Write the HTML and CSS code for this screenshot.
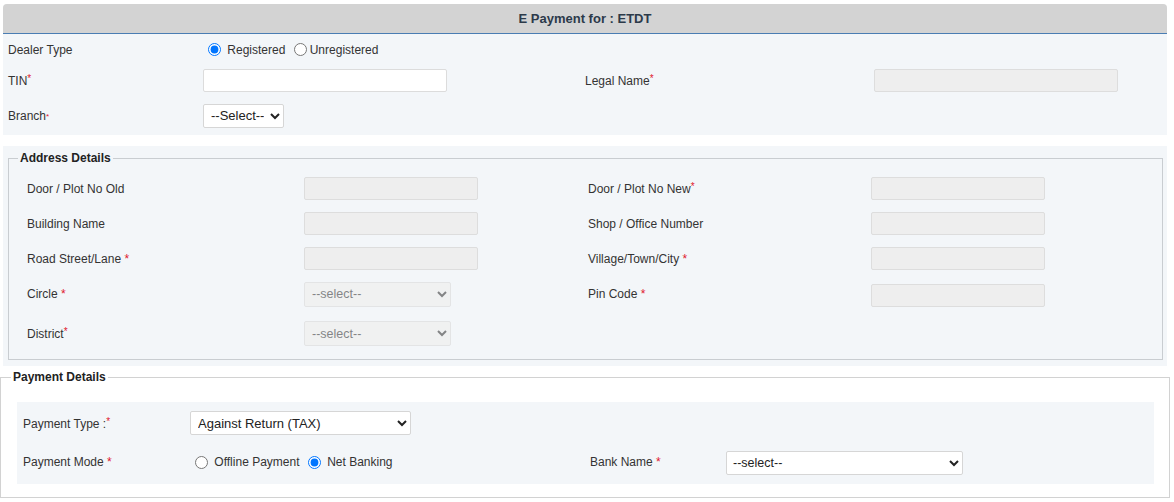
FILE: index.html
```html
<!DOCTYPE html>
<html>
<head>
<meta charset="utf-8">
<link rel="stylesheet" href="styles.css">
</head>
<body>
<div class="top panel">
  <div class="header">E Payment for : ETDT</div>
  <div class="grid grid-top">
    <div class="lbl">Dealer Type</div>
    <div class="ctl radios"><input type="radio" name="dt" checked> Registered <input type="radio" name="dt">Unregistered</div>
    <div></div><div></div>
    <div class="lbl">TIN<span class="req sup">*</span></div>
    <div class="ctl"><input type="text" class="inp w244"></div>
    <div class="lbl">Legal Name<span class="req sup">*</span></div>
    <div class="ctl"><input type="text" class="inp dis w244" disabled></div>
    <div class="lbl">Branch<span class="req dot">*</span></div>
    <div class="ctl"><select class="sel branch"><option>--Select--</option></select></div>
    <div></div><div></div>
  </div>
</div>

<div class="addr panel">
  <fieldset class="fs fs-addr">
    <legend>Address Details</legend>
    <div class="grid grid-addr">
      <div class="lbl">Door / Plot No Old</div>
      <div class="ctl"><input type="text" class="inp dis w174" disabled></div>
      <div class="lbl">Door / Plot No New<span class="req sup">*</span></div>
      <div class="ctl"><input type="text" class="inp dis w174" disabled></div>

      <div class="lbl">Building Name</div>
      <div class="ctl"><input type="text" class="inp dis w174" disabled></div>
      <div class="lbl">Shop / Office Number</div>
      <div class="ctl"><input type="text" class="inp dis w174" disabled></div>

      <div class="lbl">Road Street/Lane <span class="req">*</span></div>
      <div class="ctl"><input type="text" class="inp dis w174" disabled></div>
      <div class="lbl">Village/Town/City <span class="req">*</span></div>
      <div class="ctl"><input type="text" class="inp dis w174" disabled></div>

      <div class="lbl">Circle <span class="req">*</span></div>
      <div class="ctl"><select class="sel sel-dis w147 lower" disabled><option>--select--</option></select></div>
      <div class="lbl">Pin Code <span class="req">*</span></div>
      <div class="ctl"><input type="text" class="inp dis w174 lower" disabled></div>

      <div class="lbl">District<span class="req sup">*</span></div>
      <div class="ctl"><select class="sel sel-dis w147" disabled><option>--select--</option></select></div>
      <div></div><div></div>
    </div>
  </fieldset>
</div>

<fieldset class="fs fs-pay">
  <legend>Payment Details</legend>
  <div class="paypanel">
    <div class="grid grid-pay">
      <div class="lbl">Payment Type :<span class="req sup">*</span></div>
      <div class="ctl"><select class="sel ptype"><option>Against Return (TAX)</option></select></div>
      <div></div><div></div>
      <div class="lbl">Payment Mode <span class="req">*</span></div>
      <div class="ctl radios"><input type="radio" name="pm"> Offline Payment <input type="radio" name="pm" checked> Net Banking</div>
      <div class="lbl">Bank Name <span class="req">*</span></div>
      <div class="ctl"><select class="sel bank"><option>--select--</option></select></div>
    </div>
  </div>
</fieldset>
</body>
</html>
```
FILE: styles.css
```css
html, body {
  margin: 0;
  padding: 0;
  background: #ffffff;
}
body {
  font-family: "Liberation Sans", Arial, sans-serif;
  font-size: 12px;
  color: #333333;
  width: 1174px;
}
.panel {
  background: #f3f6f9;
  margin-left: 3px;
  width: 1164px;
}
.top {
  margin-top: 4px;
  border-radius: 4px 4px 0 0;
}
.header {
  height: 29px;
  line-height: 29px;
  background: #d3d3d3;
  border-bottom: 1px solid #4a7db3;
  border-radius: 4px 4px 0 0;
  text-align: center;
  font-weight: bold;
  font-size: 13px;
  color: #2c3a4a;
}
.grid {
  display: grid;
  align-items: center;
}
.grid-top {
  padding-left: 5px;
  grid-template-columns: 195px 382px 289px 1fr;
  grid-template-rows: 31px 31px 39px;
}
.lbl {
  white-space: nowrap;
}
.ctl {
  display: flex;
  align-items: center;
  white-space: pre;
}
.radios input[type=radio] {
  margin: 0 3px 0 5px;
  width: 13px;
  height: 13px;
}
.req {
  color: #e0192e;
}
.sup {
  font-size: 10px;
  vertical-align: 3px;
}
.dot {
  font-size: 8px;
  vertical-align: 1px;
}
.inp {
  box-sizing: border-box;
  height: 23px;
  border: 1px solid #dcdcdc;
  border-radius: 2px;
  background: #ffffff;
  margin: 0;
  padding: 0 6px;
  font-family: inherit;
  font-size: 12px;
}
.inp.dis {
  background: #eeeeee;
  border-color: #dddddd;
}
.w244 { width: 244px; }
.w174 { width: 174px; }
.w147 { width: 147px; }
.lower { margin-top: 3px; }
.sel {
  box-sizing: border-box;
  height: 24px;
  margin: 0;
  border: 1px solid #d6d6d6;
  border-radius: 2px;
  background-color: #ffffff;
  font-family: "Liberation Sans", Arial, sans-serif;
  font-size: 13px;
  color: #222222;
  padding: 0 3px;
}
.branch { width: 81px; }
.sel-dis {
  height: 25px;
  background-color: #efefef;
  border-color: #dddddd;
  color: #555555;
  font-size: 12.5px;
  padding-left: 3px;
}
.addr {
  margin-top: 11px;
  padding-top: 5px;
  padding-bottom: 6px;
}
.fs {
  margin: 0;
  padding: 0;
  min-width: 0;
}
.fs legend {
  font-weight: bold;
  font-size: 12px;
  color: #222222;
  padding: 0 2px;
  line-height: 14px;
}
.fs-addr {
  margin: 0 4px 0 5px;
  border: 1px solid #c9cdd1;
  padding: 6px 0 4px 18px;
}
.fs-addr legend {
  margin-left: -9px;
}
.grid-addr {
  grid-template-columns: 277px 284px 283px 1fr;
  grid-template-rows: 35px 35px 35px 36px 43px;
}
.fs-pay {
  margin-top: 4px;
  width: 1170px;
  box-sizing: border-box;
  border: 1px solid #d2d2d2;
  padding: 18px 15px 13px 16px;
}
.fs-pay legend {
  margin-left: -6px;
}
.paypanel {
  background: #f3f6f9;
  padding: 8px 6px 9px 6px;
}
.grid-pay {
  grid-template-columns: 167px 400px 136px 1fr;
  grid-template-rows: 26px 26px;
  row-gap: 13px;
}
.ptype {
  width: 221px;
  padding-left: 3px;
  font-size: 13px;
}
.bank {
  width: 237px;
  padding-left: 2px;
  font-size: 12.5px;
  margin-top: 1px;
}
```
